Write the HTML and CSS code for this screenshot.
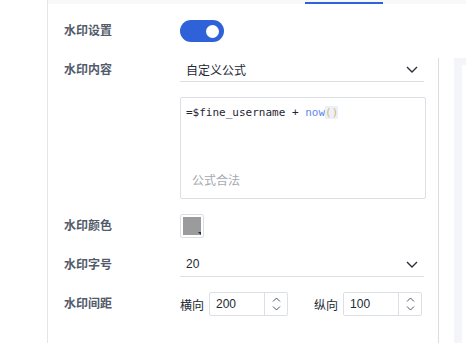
FILE: index.html
```html
<!DOCTYPE html>
<html lang="zh-CN">
  <head>
    <meta charset="UTF-8" />
    <title>水印设置</title>
    <link rel="stylesheet" href="styles.css">
  </head>
  <body>
    <div class="page">
      <aside class="sidebar"></aside>

      <main class="main">
        <div class="tabs"><span class="tab-line"></span></div>

        <!-- 开关 -->
        <div class="row row-switch">
          <div class="label">水印设置</div>
          <span class="toggle"><span class="knob"></span></span>
        </div>

        <div class="body">
          <div class="form">
            <div class="row">
              <div class="label">水印内容</div>
              <div class="control">
                <div class="select">
                  <span>自定义公式</span>
                  <svg class="chevron" width="12" height="7" viewBox="0 0 12 7">
                    <path d="M1 1 L6 6 L11 1" fill="none" stroke="#2b303a" stroke-width="1.4" />
                  </svg>
                </div>
                <div class="formula">
                  <div class="code">=$fine_username + <span class="fn">now</span><span class="paren">()</span></div>
                  <div class="hint">公式合法</div>
                </div>
              </div>
            </div>

            <div class="row">
              <div class="label">水印颜色</div>
              <div class="control">
                <span class="swatch"><span class="swatch-fill"></span></span>
              </div>
            </div>

            <div class="row">
              <div class="label">水印字号</div>
              <div class="control">
                <div class="select">
                  <span>20</span>
                  <svg class="chevron" width="12" height="7" viewBox="0 0 12 7">
                    <path d="M1 1 L6 6 L11 1" fill="none" stroke="#2b303a" stroke-width="1.4" />
                  </svg>
                </div>
              </div>
            </div>

            <div class="row">
              <div class="label">水印间距</div>
              <div class="control spacing">
                <span class="axis">横向</span>
                <div class="number">
                  <span class="value">200</span>
                  <span class="spin">
                    <svg width="9" height="5" viewBox="0 0 9 5"><path d="M1 4.5 L4.5 1 L8 4.5" fill="none" stroke="#4a5468" stroke-width="1" /></svg>
                    <svg width="9" height="5" viewBox="0 0 9 5"><path d="M1 0.5 L4.5 4 L8 0.5" fill="none" stroke="#4a5468" stroke-width="1" /></svg>
                  </span>
                </div>
                <span class="axis axis-second">纵向</span>
                <div class="number">
                  <span class="value">100</span>
                  <span class="spin">
                    <svg width="9" height="5" viewBox="0 0 9 5"><path d="M1 4.5 L4.5 1 L8 4.5" fill="none" stroke="#4a5468" stroke-width="1" /></svg>
                    <svg width="9" height="5" viewBox="0 0 9 5"><path d="M1 0.5 L4.5 4 L8 0.5" fill="none" stroke="#4a5468" stroke-width="1" /></svg>
                  </span>
                </div>
              </div>
            </div>
          </div>

          <div class="side"><div class="side-card"></div></div>
        </div>
      </main>
    </div>
  </body>
</html>
```

FILE: styles.css
```css
body {
  margin: 0;
  font-family: "Liberation Sans", "Noto Sans CJK SC", sans-serif;
  font-size: 12px;
  color: #222a35;
  background: #fff;
}
.page {
  display: flex;
  height: 100vh;
  overflow: hidden;
}
.sidebar {
  width: 47px;
  border-right: 1px solid #e4e5ea;
  flex-shrink: 0;
}
.main {
  flex: 1;
  display: flex;
  flex-direction: column;
}
.tabs {
  height: 4px;
  background: #f7f8fa;
  display: flex;
  align-items: flex-end;
}
.tab-line {
  margin-left: 257px;
  width: 78px;
  height: 2px;
  background: #2f62d9;
}
.row {
  display: flex;
  align-items: flex-start;
}
.row-switch {
  margin-top: 16px;
  padding-left: 16px;
  align-items: center;
}
.label {
  width: 116px;
  flex-shrink: 0;
  line-height: 24px;
  font-weight: bold;
  color: #535b6b;
}
.row-switch .label {
  line-height: 22px;
}
.toggle {
  width: 44px;
  height: 22px;
  border-radius: 11px;
  background: #2f62d9;
  display: flex;
  align-items: center;
  justify-content: flex-end;
  padding-right: 5px;
  box-sizing: border-box;
}
.knob {
  width: 13px;
  height: 13px;
  border-radius: 50%;
  background: #fff;
}
.body {
  display: flex;
  flex: 1;
  margin-top: 16px;
}
.form {
  width: 391px;
  box-sizing: border-box;
  border-right: 1px solid #dcdde1;
  padding-left: 16px;
  display: flex;
  flex-direction: column;
  gap: 15px;
}
.control {
  width: 246px;
  display: flex;
  flex-direction: column;
  gap: 15px;
}
.select {
  width: 244px;
  height: 24px;
  box-sizing: border-box;
  border-bottom: 1px solid #dcdfe6;
  display: flex;
  align-items: center;
  justify-content: space-between;
  padding: 0 6px 1px 6px;
}
.formula {
  height: 102px;
  box-sizing: border-box;
  border: 1px solid #dcdfe6;
  border-radius: 2px;
  padding: 7px 5px 8px 5px;
  display: flex;
  flex-direction: column;
  justify-content: space-between;
}
.code {
  font-family: "DejaVu Sans Mono", monospace;
  font-size: 11px;
  line-height: 16px;
  color: #1f2633;
}
.fn {
  color: #5f88e8;
}
.paren {
  color: #e0b866;
  background: #eaf1fb;
}
.hint {
  padding-left: 6px;
  line-height: 18px;
  color: #a6a9b0;
}
.swatch {
  width: 24px;
  height: 24px;
  box-sizing: border-box;
  border: 1px solid #dcdfe6;
  border-radius: 2px;
  padding: 2px;
  position: relative;
}
.swatch-fill {
  display: block;
  width: 100%;
  height: 100%;
  background: #9b9b9b;
}
.swatch::after {
  content: "";
  position: absolute;
  right: 2px;
  bottom: 2px;
  border-left: 3px solid transparent;
  border-top: 3px solid #1b2a4a;
}
.spacing {
  flex-direction: row;
  align-items: center;
  gap: 0;
}
.axis {
  color: #222a35;
  margin-right: 5px;
}
.axis-second {
  margin-left: 26px;
}
.number {
  width: 79px;
  height: 24px;
  box-sizing: border-box;
  border: 1px solid #dcdfe6;
  border-radius: 2px;
  display: flex;
  align-items: center;
}
.value {
  flex: 1;
  padding-left: 6px;
}
.spin {
  width: 23px;
  height: 100%;
  border-left: 1px solid #dcdfe6;
  display: flex;
  flex-direction: column;
  align-items: center;
  justify-content: space-between;
  padding: 4px 0 4px;
  box-sizing: border-box;
}
.spin svg {
  display: block;
}
.side {
  flex: 1;
  margin-left: 15px;
  background: #f4f5f8;
  padding: 7px 0 0 8px;
  display: flex;
}
.side-card {
  flex: 1;
  background: #fff;
}
```
